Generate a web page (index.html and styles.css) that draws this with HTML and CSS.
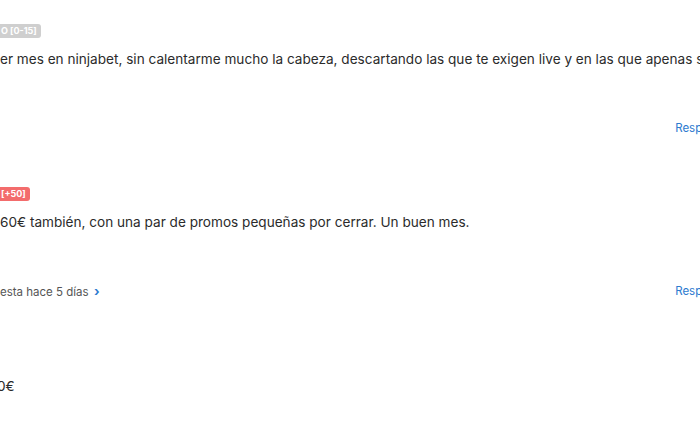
FILE: index.html
```html
<!DOCTYPE html>
<html lang="es">
  <head>
    <meta charset="UTF-8" />
    <meta name="viewport" content="width=device-width, initial-scale=1.0" />
    <title>Comentarios</title>
    <link rel="stylesheet" href="styles.css">
  </head>
  <body>
    <div class="thread">
      <div class="comment">
        <span class="badge badge-grey">O [0-15]</span>
        <p class="comment-text">
          er mes en ninjabet, sin calentarme mucho la cabeza, descartando las que te exigen live y en las que apenas saco nada.
        </p>
        <div class="comment-footer">
          <span></span>
          <a href="#" class="reply">Responder</a>
        </div>
      </div>

      <div class="comment">
        <span class="badge badge-red">[+50]</span>
        <p class="comment-text">
          60€ también, con una par de promos pequeñas por cerrar. Un buen mes.
        </p>
        <div class="comment-footer">
          <a href="#" class="replies">esta hace 5 días <span class="chevron">&#x203A;</span></a>
          <a href="#" class="reply">Responder</a>
        </div>
      </div>

      <div class="comment comment-last">
        <p class="comment-text">0€</p>
      </div>
    </div>
  </body>
</html>
```

FILE: styles.css
```css
html,
body {
  margin: 0;
  padding: 0;
  background-color: #fff;
  overflow: hidden;
}
body {
  font-family: Inter, "Noto Sans", sans-serif;
  color: #333;
}
.thread {
  width: 760px;
  padding-top: 24px;
}
.comment {
  margin-bottom: 51px;
}
.badge {
  display: inline-block;
  color: #fff;
  font-size: 9px;
  font-weight: 700;
  line-height: 14px;
  height: 14px;
  padding: 0 4px 0 1px;
  border-radius: 0 3px 3px 0;
  vertical-align: top;
}
.badge-grey {
  background-color: #cfcfcf;
}
.badge-red {
  background-color: #f36c6c;
}
.comment-text {
  margin: 5px 0 51px 0;
  font-size: 13.6px;
  line-height: 20px;
  white-space: nowrap;
  color: #2b2b2b;
}
.comment-footer {
  display: flex;
  justify-content: space-between;
  align-items: center;
  height: 16px;
  font-size: 11.5px;
  line-height: 16px;
  padding-right: 26px;
}
.comment-footer a {
  text-decoration: none;
}
.reply {
  color: #2d7bcf;
}
.replies {
  color: #555;
}
.chevron {
  color: #2d7bcf;
  font-weight: 700;
  font-size: 13px;
  line-height: 16px;
  margin-left: 2px;
}
.comment-last {
  padding-top: 26px;
}
.comment-last .comment-text {
  margin: 0;
  text-indent: -3px;
}
```
